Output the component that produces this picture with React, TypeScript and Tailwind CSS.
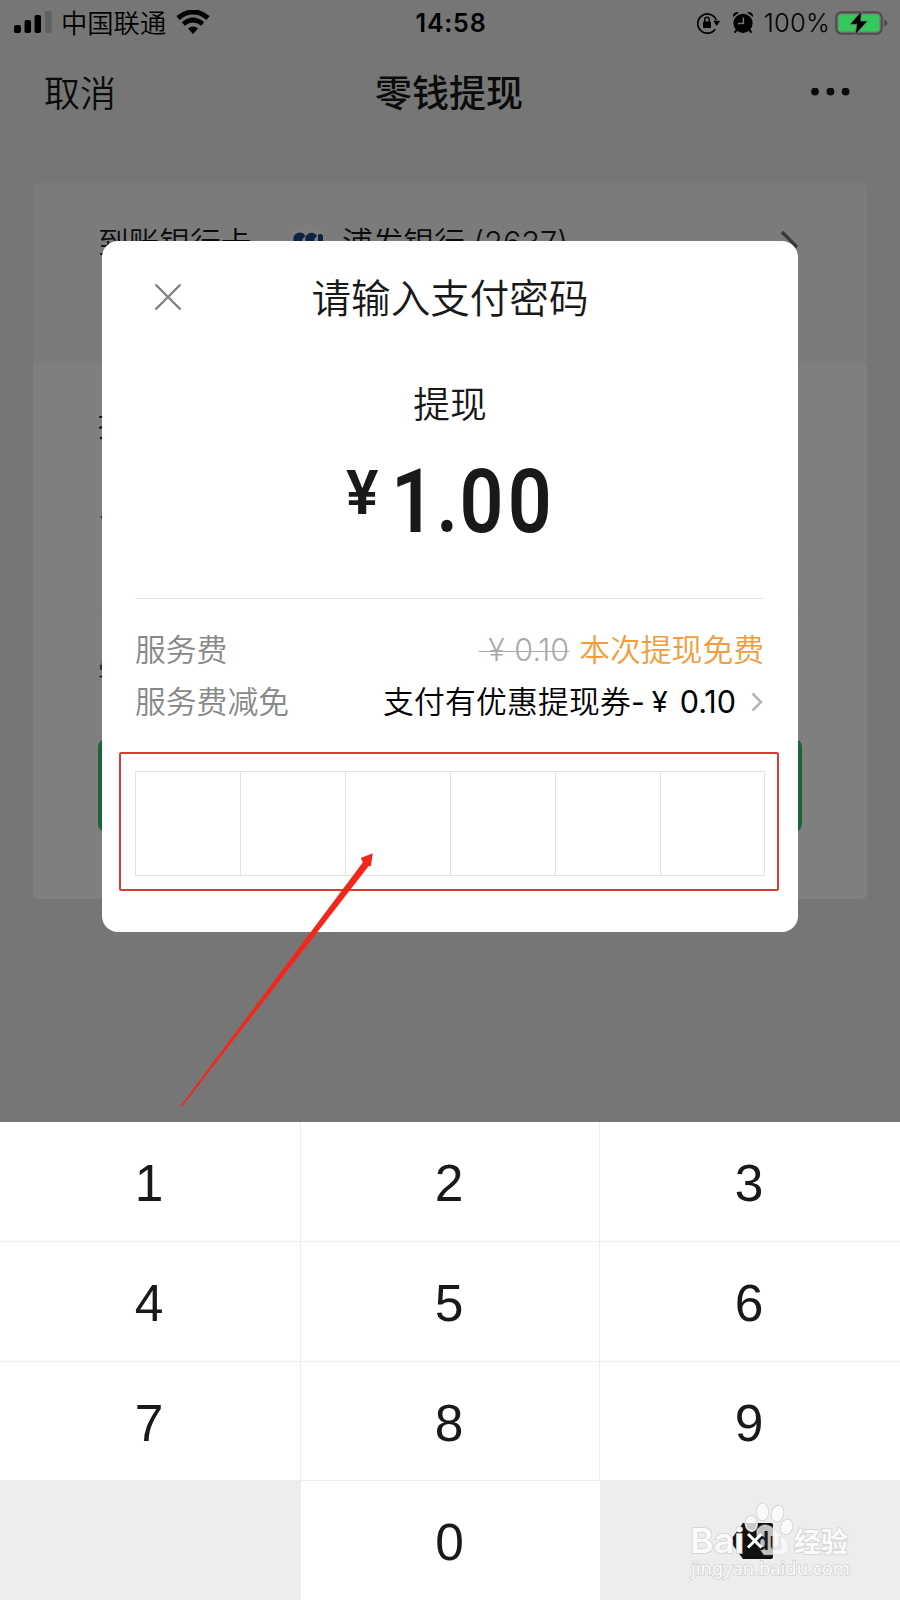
import React from 'react';

const KEYS = ['1', '2', '3', '4', '5', '6', '7', '8', '9'];

const StatusBar: React.FC = () => (
  <div className="relative z-10 flex h-[46px] items-center justify-between pl-[14px] pr-[12px] text-black">
    <div className="flex w-[300px] items-center">
      <svg className="h-6 w-[38px]" viewBox="0 0 38 24" fill="currentColor">
        <rect x="0" y="14" width="7" height="8" rx="2" />
        <rect x="10.5" y="9" width="6.5" height="13" rx="2" />
        <rect x="20.5" y="4" width="6.5" height="18" rx="2" />
        <rect x="31" y="-1" width="6.5" height="23" rx="2" fill="#616161" />
      </svg>
      <span className="mt-[2px] ml-[9px] text-[26.3px] leading-none font-[350]">中国联通</span>
      <svg className="mb-[2px] ml-[10px] h-6 w-[34px]" viewBox="0 0 34 24" fill="none" stroke="currentColor">
        <path d="M2 8Q17-4.2 32 8" strokeWidth="5" />
        <path d="M7.3 14Q17 6 26.7 14" strokeWidth="4.6" />
        <path d="M12 18.6Q17 14.6 22 18.6L17 24Z" fill="currentColor" stroke="none" />
      </svg>
    </div>
    <span className="w-[90px] text-center text-[25px] leading-none font-semibold tracking-[0.8px]">14:58</span>
    <div className="flex w-[300px] items-center justify-end">
      <svg className="mr-px h-6 w-6" viewBox="0 0 24 24" fill="none" stroke="currentColor">
        <path d="M20.3 9A9.6 9.6 0 1 0 19.2 18.2" strokeWidth="1.7" />
        <path d="M17.3 9.8h6.9l-3.5 5.2Z" fill="currentColor" stroke="none" />
        <rect x="7" y="10.5" width="8" height="6.5" rx="1" fill="currentColor" stroke="none" />
        <path d="M8.8 11V8.4a2.2 2.2 0 0 1 4.4 0V11" strokeWidth="1.5" />
      </svg>
      <svg className="ml-[11px] h-6 w-[22px]" viewBox="0 0 22 24" fill="currentColor">
        <circle cx="11" cy="12.3" r="9.6" />
        <path d="M1 6A4.2 4.2 0 0 1 7 1.4ZM21 6A4.2 4.2 0 0 0 15 1.4Z" />
        <path d="M4.8 18.6 2.6 21.6M17.2 18.6 19.4 21.6" stroke="currentColor" strokeWidth="2" />
        <path d="M11.4 6.5V12.6H6" fill="none" stroke="#767676" strokeWidth="1.5" />
      </svg>
      <span className="ml-[10px] text-[25.5px] leading-none font-[350] tracking-[0.2px]">100%</span>
      <svg className="ml-[5px] h-6 w-[53px]" viewBox="0 0 53 24">
        <rect x="1.2" y="1.2" width="45.6" height="21.6" rx="5.5" fill="none" stroke="#4d4d4d" strokeWidth="2" />
        <rect x="3.5" y="3.5" width="41" height="17" rx="3" fill="#34c95a" />
        <path d="M49 8.5Q52.5 10 52.5 12T49 15.5Z" fill="#4d4d4d" />
        <path d="M26.5 0 15 13.3h6.8L20 24 32.5 10H25.7Z" fill="#000" stroke="#767676" strokeWidth="0.8" />
      </svg>
    </div>
  </div>
);

const WithdrawPage: React.FC = () => (
  <div className="absolute inset-0 flex flex-col bg-[#ededed] pt-[46px]">
    <div className="flex h-[92px] items-center justify-between px-[44px] text-[#161616]">
      <span className="w-[111px] pt-[3px] text-[36px] font-[350]">取消</span>
      <span className="pt-[3px] pr-[2px] text-[37px] font-medium">零钱提现</span>
      <svg className="h-2 w-[111px]" viewBox="0 0 111 8" fill="currentColor">
        <circle cx="70" cy="3.5" r="3.9" />
        <circle cx="85.4" cy="3.5" r="3.9" />
        <circle cx="100.6" cy="3.5" r="3.9" />
      </svg>
    </div>
    <div className="mx-[33px] mt-[45px] h-[716px] overflow-hidden rounded-[5px] bg-white">
      <div className="flex h-[180px] items-start bg-[#f7f7f7] pt-[40px] pl-[65px] text-[30.7px] leading-[40px] text-[#161616]">
        <span className="w-[191px] font-[350]">到账银行卡</span>
        <svg className="mt-[2px] h-[38px] w-[38px]" viewBox="0 0 38 38">
          <circle cx="19" cy="19" r="19" fill="#fcfcfc" />
          <path d="M5 17A6 6 0 0 1 16.5 11L13.5 14V19H5ZM17 17A6 6 0 0 1 28 11L25.5 14V19H17ZM29 9.5Q33.5 8 34 11V20H29Z" fill="#1c4584" />
        </svg>
        <span className="ml-[15px] w-[438px] font-[350]">浦发银行 (2637)</span>
        <svg className="mt-[7px] h-8 w-5" viewBox="0 0 20 32" fill="none" stroke="#707070" strokeWidth="3.2">
          <path d="M2 2 16 16 2 30" />
        </svg>
      </div>
      <div className="px-[65px] text-[#161616]">
        <div className="pt-[40px] text-[30.5px] leading-[44px] font-[350]">提</div>
        <div className="h-[168px] border-b border-[#f2f2f2] pt-[49px] pl-[2px] text-[40px] leading-[70px] font-medium">¥</div>
        <div className="pt-[39px] text-[26px] leading-[40px] text-[#444]">零</div>
        <div className="mt-[45px] h-[93px] rounded-lg bg-[#38c870]" />
      </div>
    </div>
  </div>
);

const PasswordDialog: React.FC = () => (
  <div className="absolute top-[241px] left-[102px] h-[691px] w-[696px] rounded-[16px] bg-white px-[33px] text-[#191919]">
    <div className="relative flex h-[113px] items-center justify-center pt-[4px]">
      <svg className="absolute top-[42px] left-[19px] h-[28px] w-[28px]" viewBox="0 0 28 28" stroke="#808080" strokeWidth="2.4">
        <path d="M1.5 1.5 26.5 26.5M26.5 1.5 1.5 26.5" />
      </svg>
      <span className="text-[39.6px] font-[350]">请输入支付密码</span>
    </div>
    <div className="mt-[21px] text-center text-[36.8px] leading-[60px] font-[350]">提现</div>
    <div className="mr-px flex h-[164px] items-start border-b border-[#e5e5e5] pt-[18px] pl-[211px] font-[Roboto,sans-serif] font-semibold">
      <span className="mt-[8px] text-[61px] leading-[64px]">¥</span>
      <span className="ml-[12px] origin-left scale-x-[0.87] text-[88.5px] leading-[98px] tracking-[5px]">
        <span className="tracking-[1.5px]">1.</span>00
      </span>
    </div>
    <div className="mt-[25px] mr-px text-[30.8px] leading-[52px] font-[350]">
      <div className="flex items-center justify-between text-[#888]">
        <span>服务费</span>
        <div className="flex">
          <span className="mr-[10px] text-[30.5px] font-light [word-spacing:1px] text-[#aaa] line-through decoration-1">&nbsp;¥ 0.10</span>
          <span className="text-[#f29c3c]">本次提现免费</span>
        </div>
      </div>
      <div className="flex items-center justify-between">
        <span className="text-[#888]">服务费减免</span>
        <div className="flex items-center text-black">
          <span className="tracking-[0.2px]">支付有优惠提现券</span>
          <span className="text-[30px] font-normal">-</span>
          <span className="mr-[12px] ml-[7px] text-[29px] font-normal">¥</span>
          <span className="text-[30.5px] font-normal">0.10</span>
          <svg className="mr-[1px] ml-[15px] h-5 w-3" viewBox="0 0 12 20" fill="none" stroke="#b5b5b5" strokeWidth="2.6">
            <path d="M1.5 1.5 10 10 1.5 18.5" />
          </svg>
        </div>
      </div>
    </div>
    <div className="-ml-[16px] mt-[24px] h-[139px] w-[660px] rounded-[2px] border-2 border-[#d93a32] px-[14px] pt-[17px]">
      <div className="grid h-[105px] w-[630px] grid-cols-[105px_105px_105px_105px_105px_103px] border border-[#e2e2e2]">
        {KEYS.slice(0, 6).map(k => (
          <div key={k} className="border-r border-[#e2e2e2] last:border-r-0" />
        ))}
      </div>
    </div>
  </div>
);

const Watermark: React.FC = () => (
  <svg className="absolute right-0 bottom-0 h-[140px] w-[300px]" viewBox="0 0 300 140" fill="#fafafa" stroke="#d2d2d2" strokeWidth="1.6" paintOrder="stroke">
    <defs>
      {/* the letters are cut out of the paw, so they take the colour of what is behind */}
      <linearGradient id="cutout" gradientUnits="userSpaceOnUse" x1="172" y1="0" x2="173" y2="0">
        <stop offset="0" stopColor="#1a1a1a" />
        <stop offset="1" stopColor="#e6e6e6" />
      </linearGradient>
    </defs>
    <path d="M157 70Q163 62 171 67L184 78Q190 84 188 90T176 94.5H164L157 84Z" fillOpacity="0.75" strokeOpacity="0.5" />
    <ellipse cx="162.5" cy="52" rx="5.7" ry="8.4" />
    <ellipse cx="177.5" cy="53.5" rx="5.7" ry="7.9" transform="rotate(12 177.5 53.5)" />
    <ellipse cx="151.2" cy="63.5" rx="5.8" ry="7.7" transform="rotate(-8 151.2 63.5)" fillOpacity="0.8" />
    <ellipse cx="186.6" cy="67" rx="5.7" ry="7.4" transform="rotate(15 186.6 67)" />
    <text x="156" y="90" fontFamily="Open Sans, sans-serif" fontSize="25" fontWeight="700" fill="url(#cutout)" stroke="none" textLength="27" lengthAdjust="spacingAndGlyphs">du</text>
    <path d="M148 74 161.5 87.5M161.5 74 148 87.5" stroke="#fff" strokeWidth="3" />
    <text x="90" y="93" fontFamily="Inter, sans-serif" fontSize="34" fontWeight="600" textLength="54" lengthAdjust="spacingAndGlyphs">Bai</text>
    <text x="194" y="91.5" fontFamily="Noto Sans CJK SC, sans-serif" fontSize="27" fontWeight="700" textLength="54">经验</text>
    <text x="91" y="114.5" fontFamily="Noto Sans, sans-serif" fontSize="18" textLength="159" lengthAdjust="spacingAndGlyphs">jingyan.baidu.com</text>
  </svg>
);

const Keypad: React.FC = () => (
  <div className="absolute inset-x-0 bottom-0 grid h-[478px] grid-cols-[301px_299px_300px] grid-rows-[120px_120px_119px_119px] bg-white font-['Liberation_Sans',sans-serif] text-[51.5px] text-[#191919]">
    {KEYS.map(k => (
      <div key={k} className="flex items-center justify-center border-r border-b border-[#eee] pt-[5px] pr-[2px] nth-[3n]:border-r-0">
        {k}
      </div>
    ))}
    <div className="bg-[#ededed]" />
    <div className="flex items-center justify-center pt-[5px] pr-[2px]">0</div>
    <div className="flex items-center justify-center bg-[#ededed] pl-[2px]">
      <svg className="h-9 w-[43px]" viewBox="0 0 43 36">
        <path d="M13 0H41Q43 0 43 2V34Q43 36 41 36H13L0 18Z" fill="#111" />
      </svg>
    </div>
  </div>
);

export default function App() {
  return (
    <div className="relative h-[1600px] w-[900px] overflow-hidden bg-[#767676] font-[Inter,'Noto_Sans_CJK_SC',sans-serif]">
      <WithdrawPage />
      <div className="absolute inset-0 bg-black/50" />
      <StatusBar />
      <PasswordDialog />
      <Keypad />
      <Watermark />
      {/* pointer to the password field */}
      <svg className="absolute top-[850px] left-[178px] h-[260px] w-[200px]" viewBox="0 0 200 260" fill="#f4261a">
        <path d="M2.5 256 184.8 12.5 182.8 8 194.8 3.2 192.9 16 190.5 16.2 3.8 256.8Z" />
      </svg>
    </div>
  );
}
